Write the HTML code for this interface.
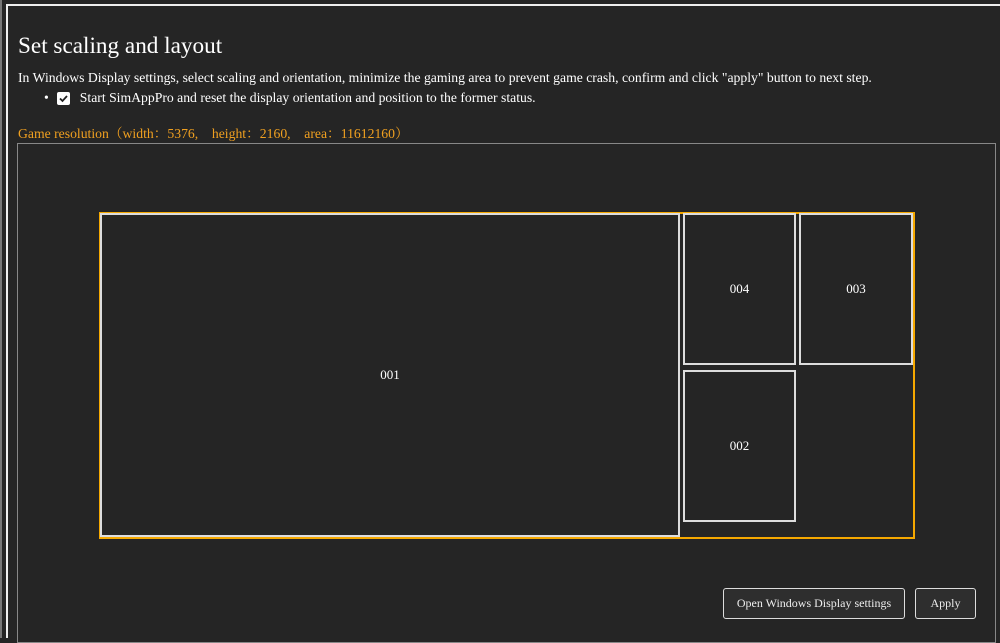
<!DOCTYPE html>
<html><head><style>
body{margin:0;width:1000px;height:638px;background:#252525;position:relative;overflow:hidden;font-family:"Liberation Serif",serif;color:#fff}
.a{position:absolute;box-sizing:border-box;white-space:nowrap}
.r{border:2px solid #ddd;display:flex;align-items:center;justify-content:center;font-size:13px}
.btn{border:1px solid #ddd;border-radius:3px;background:#2e2e2e;display:flex;align-items:center;justify-content:center;font-size:12px;color:#eee}
</style></head><body>
<div class="a" style="left:0;top:0;width:2px;height:638px;background:#777"></div>
<div class="a" style="left:6px;top:4px;width:2px;height:634px;background:#eee"></div>
<div class="a" style="left:6px;top:4px;width:994px;height:2px;background:#eee"></div>
<div class="a" style="left:18px;top:33px;font-size:23.2px">Set scaling and layout</div>
<div class="a" style="left:18px;top:70px;font-size:13.7px">In Windows Display settings, select scaling and orientation, minimize the gaming area to prevent game crash, confirm and click "apply" button to next step.</div>
<div class="a" style="left:44px;top:90px;font-size:13.7px;display:flex;align-items:center">•<span style="display:inline-block;width:13px;height:13px;background:#fff;border-radius:2px;margin:0 10px 0 8px;position:relative"><svg width="13" height="13" style="position:absolute;left:0;top:0"><path d="M3 6.5l2.5 2.5 4.5-5" stroke="#222" stroke-width="1.8" fill="none"/></svg></span>Start SimAppPro and reset the display orientation and position to the former status.</div>
<div class="a" style="left:18px;top:122px;font-size:13.7px;color:#f0a020;font-family:'Liberation Serif','Noto Serif CJK SC',serif">Game resolution（width：5376,　height：2160,　area：11612160）</div>
<div class="a" style="left:17px;top:143px;width:979px;height:500px;border:1px solid #888"></div>
<div class="a" style="left:99px;top:212px;width:816px;height:327px;border:2px solid #f5a800"></div>
<div class="a r" style="left:100px;top:213px;width:580px;height:324px">001</div>
<div class="a r" style="left:683px;top:213px;width:113px;height:152px">004</div>
<div class="a r" style="left:799px;top:213px;width:114px;height:152px">003</div>
<div class="a r" style="left:683px;top:370px;width:113px;height:152px">002</div>
<div class="a btn" style="left:723px;top:588px;width:182px;height:31px">Open Windows Display settings</div>
<div class="a btn" style="left:915px;top:588px;width:61px;height:31px">Apply</div>
</body></html>
